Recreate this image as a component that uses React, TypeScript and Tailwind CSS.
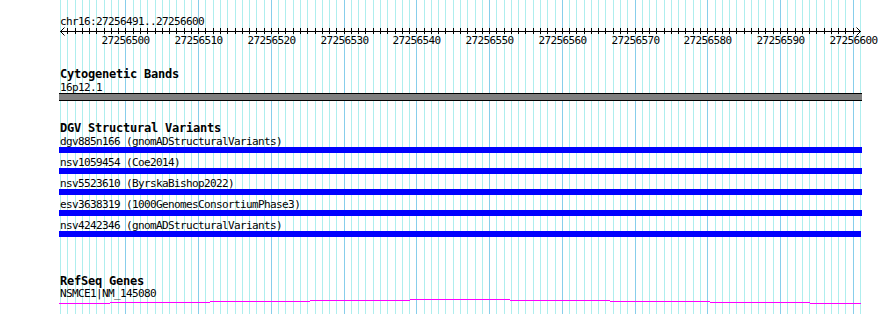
const START = 27256491;
const BP = 110;
const LEFT = 60;
const SCALE = 800 / BP;

// x pixel of the left edge of a base (rounded like the original GD canvas)
const px = (i: number) => Math.round(LEFT + i * SCALE);

const GRID = Array.from({ length: BP + 1 }, (_, i) => ({ x: px(i), major: (START + i) % 10 === 0 }));

const VARIANTS = [
  { id: 'dgv885n166', src: 'gnomADStructuralVariants', w: 'w-[803px]' },
  { id: 'nsv1059454', src: 'Coe2014', w: 'w-[803px]' },
  { id: 'nsv5523610', src: 'ByrskaBishop2022', w: 'w-[803px]' },
  { id: 'esv3638319', src: '1000GenomesConsortiumPhase3', w: 'w-[803px]' },
  { id: 'nsv4242346', src: 'gnomADStructuralVariants', w: 'w-[802px]' },
];

// transcript line: shallow hat, one step every 100px
const GENE = [
  [59, 110, 4],
  [110, 210, 3],
  [210, 310, 2],
  [310, 410, 1],
  [410, 510, 0],
  [510, 610, 1],
  [610, 710, 2],
  [710, 810, 3],
  [810, 861, 4],
];

function GridLines() {
  return (
    <svg className="absolute inset-0" width="890" height="314" shapeRendering="crispEdges">
      {GRID.map((g) => (
        <rect key={g.x} x={g.x} y={0} width={1} height={314} fill={g.major ? '#87ceeb' : '#aeeeee'} />
      ))}
    </svg>
  );
}

function Ruler() {
  const labels = GRID.map((g, i) => ({ ...g, pos: START + i })).filter((g) => g.major);
  return (
    <svg width="890" height="20" shapeRendering="crispEdges" className="block">
      <rect x={60} y={4} width={801} height={1} fill="#000" />
      {GRID.slice(1, -1).map((g) => (
        <rect key={g.x} x={g.x} y={1} width={1} height={6} fill="#000" />
      ))}
      <path d="M64.5 0.5 L60.5 4.5 L64.5 8.5" stroke="#000" fill="none" shapeRendering="auto" />
      <path d="M856.5 0.5 L860.5 4.5 L856.5 8.5" stroke="#000" fill="none" shapeRendering="auto" />
      {labels.map((l) => (
        <text
          key={l.pos}
          x={l.x + 0.5}
          y={17}
          textAnchor="middle"
          fontSize={11}
          letterSpacing={-0.62}
          fill="#000"
          style={{ fontFamily: '"DejaVu Sans Mono", monospace' }}
        >
          {l.pos}
        </text>
      ))}
    </svg>
  );
}

const label = 'pl-[60px] text-[11px] leading-[11px] tracking-[-0.62px] text-black whitespace-pre';
const heading = 'pl-[60px] text-[12px] leading-[12px] font-bold tracking-[-0.22px] text-black whitespace-pre';

export default function App() {
  return (
    <div className="relative w-[890px] h-[314px] overflow-hidden bg-white font-['DejaVu_Sans_Mono',monospace]">
      <GridLines />
      <div className="relative flex flex-col pt-[16px]">
        <div className={label}>chr16:27256491..27256600</div>
        <Ruler />

        <div className={`${heading} mt-[21px]`}>Cytogenetic Bands</div>
        <div className={`${label} mt-[2px]`}>16p12.1</div>
        <div className="ml-[59px] w-[803px] h-[8px] border-y border-black bg-[#808080]" />

        <div className={`${heading} mt-[21px]`}>DGV Structural Variants</div>
        <div className="mt-[2px] flex flex-col">
          {VARIANTS.map((v) => (
            <div key={v.id} className="flex flex-col mb-[4px]">
              <div className={label}>
                {v.id} ({v.src})
              </div>
              <div className={`ml-[59px] ${v.w} h-[6px] bg-[#0000ff]`} />
            </div>
          ))}
        </div>

        <div className={`${heading} mt-[34px]`}>RefSeq Genes</div>
        <div className={`${label} mt-[1px]`}>NSMCE1|NM_145080</div>
        <svg width="890" height="6" shapeRendering="crispEdges" className="block">
          {GENE.map(([a, b, y]) => (
            <rect key={a} x={a} y={y} width={b - a} height={1} fill="#ff00ff" />
          ))}
        </svg>
      </div>
    </div>
  );
}
